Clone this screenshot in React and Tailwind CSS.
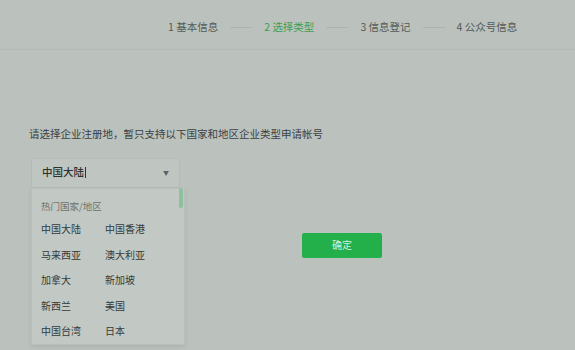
import React from "react";

const steps = [
  { n: 1, label: "基本信息" },
  { n: 2, label: "选择类型", active: true },
  { n: 3, label: "信息登记" },
  { n: 4, label: "公众号信息" },
];

const hot = [
  ["中国大陆", "中国香港"],
  ["马来西亚", "澳大利亚"],
  ["加拿大", "新加坡"],
  ["新西兰", "美国"],
  ["中国台湾", "日本"],
];

export default function App() {
  return (
    <div
      className="w-[575px] h-[350px] overflow-hidden bg-[#bbc2be] text-[#3a3f3c]"
      style={{ fontFamily: '"Noto Sans CJK SC", "Noto Sans", sans-serif' }}
    >
      {/* Steps */}
      <div className="h-[50px] border-b border-[#b1b9b4] flex items-center pl-[168px] pt-[5px]">
        {steps.map((s, i) => (
          <div key={s.n} className="flex items-center">
            <span
              className={`text-[10.5px] leading-none ${
                s.active ? "text-[#3f9e4f]" : "text-[#545a56]"
              }`}
            >
              {s.n} {s.label}
            </span>
            {i < steps.length - 1 && (
              <span className="w-[22px] h-px bg-[#abb3ae] mx-[12px]"></span>
            )}
          </div>
        ))}
      </div>

      <div className="pl-[29px] pt-[79px]">
        <p className="text-[10.5px] leading-none text-[#3c413e]">
          请选择企业注册地，暂只支持以下国家和地区企业类型申请帐号
        </p>

        <div className="flex mt-[18px]">
          <div className="relative w-[154px] ml-[2px]">
            {/* Select */}
            <div className="h-[30px] w-[149px] border border-[#b4bcb7] bg-[#bfc6c2] rounded-[2px] flex items-center pl-[10px] pr-[10px]">
              <span className="text-[10.5px] font-medium text-[#2e322f] leading-none">
                中国大陆
              </span>
              <span className="w-px h-[11px] bg-[#2e322f] ml-[1px]"></span>
              <span className="ml-auto text-[6px] text-[#5d635f]">▼</span>
            </div>

            {/* Dropdown */}
            <div className="absolute left-0 top-[30px] w-[154px] h-[157px] bg-[#c2c9c5] border border-[#b8c0bb] rounded-b-[2px] shadow-[0_2px_4px_rgba(0,0,0,0.08)]">
              <div className="absolute right-[1px] top-[-1px] w-[4px] h-[20px] rounded-[2px] bg-[#8ebf9e]"></div>
              <div className="pl-[9px] pt-[13px]">
                <div className="text-[9.5px] leading-none text-[#6d746f] mb-[5px]">
                  热门国家/地区
                </div>
                {hot.map((row, i) => (
                  <div key={i} className="flex h-[25.5px] items-center">
                    <span className="w-[64px] text-[10px] text-[#353a37]">
                      {row[0]}
                    </span>
                    <span className="text-[10px] text-[#353a37]">{row[1]}</span>
                  </div>
                ))}
              </div>
            </div>
          </div>

          <button className="ml-[117px] mt-[75px] w-[80px] h-[25px] rounded-[2px] bg-[#23b04a] text-[10px] text-[#d8efdc] leading-none">
            确定
          </button>
        </div>
      </div>
    </div>
  );
}
